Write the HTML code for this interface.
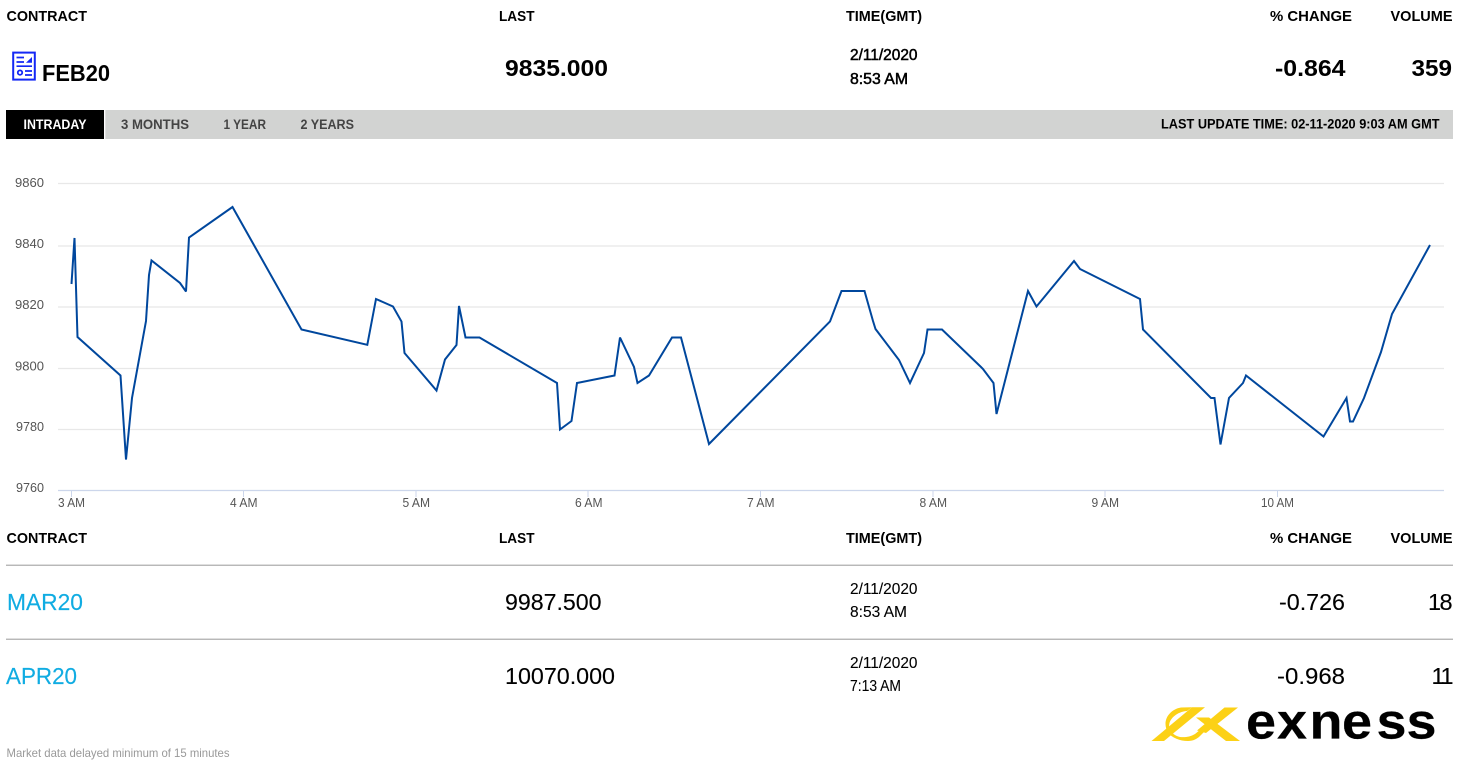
<!DOCTYPE html>
<html lang="en">
<head>
<meta charset="utf-8">
<title>FEB20 Contract</title>
<style>
html,body{margin:0;padding:0;background:#fff;width:1463px;height:768px;overflow:hidden}
svg{display:block;position:absolute;left:0;top:0}
text{font-family:"Liberation Sans",Arial,sans-serif;fill:#000}
.h{font-size:15px;font-weight:700}
.big{font-size:23.5px;font-weight:700}
.d{font-size:15.5px;stroke:#000;stroke-width:.5px}
.reg{font-size:23.5px;stroke:#000;stroke-width:.12px}
.d2{font-size:15.5px;stroke:#000;stroke-width:.1px}
.link{font-size:23.5px;fill:#10ace2;stroke:#10ace2;stroke-width:.15px}
.tab{font-size:13.5px;font-weight:700;fill:#444}
.ax{font-size:12.5px;fill:#555}
.ft{font-size:12px;fill:#999}
.grid{stroke:#e8e8e8;stroke-width:1.3}
</style>
</head>
<body>
<svg width="1463" height="768" viewBox="0 0 1463 768" xmlns="http://www.w3.org/2000/svg">
<!-- top header -->
<text class="h" x="6.5" y="21" textLength="80.5" lengthAdjust="spacingAndGlyphs">CONTRACT</text>
<text class="h" x="499" y="21" textLength="35.5" lengthAdjust="spacingAndGlyphs">LAST</text>
<text class="h" x="846" y="21" textLength="76" lengthAdjust="spacingAndGlyphs">TIME(GMT)</text>
<text class="h" x="1270" y="21" textLength="82" lengthAdjust="spacingAndGlyphs">% CHANGE</text>
<text class="h" x="1390.5" y="21" textLength="62" lengthAdjust="spacingAndGlyphs">VOLUME</text>

<!-- icon -->
<g fill="none" stroke="#1428f5">
<rect x="13.2" y="52.6" width="21.6" height="27" stroke-width="2"/>
<path d="M16.5 57.5H24M16.5 62H24M16.5 66.2H32M25 71H32M25 75H32" stroke-width="1.7"/>
<circle cx="20" cy="72.6" r="2.2" stroke-width="1.8"/>
</g>
<path d="M26 62.8L32 57V62.8Z" fill="#1428f5"/>

<!-- active row -->
<text class="big" x="42" y="81" textLength="68" lengthAdjust="spacingAndGlyphs">FEB20</text>
<text class="big" x="505" y="76" textLength="103" lengthAdjust="spacingAndGlyphs">9835.000</text>
<text class="d" x="850" y="60" textLength="67.5" lengthAdjust="spacingAndGlyphs">2/11/2020</text>
<text class="d" x="850" y="84" textLength="58" lengthAdjust="spacingAndGlyphs">8:53 AM</text>
<text class="big" x="1275" y="76" textLength="70.5" lengthAdjust="spacingAndGlyphs">-0.864</text>
<text class="big" x="1411.5" y="76" textLength="40.5" lengthAdjust="spacingAndGlyphs">359</text>

<!-- tab bar -->
<rect x="6" y="110" width="1447" height="29" fill="#d2d3d2"/>
<rect x="6" y="110" width="98" height="29" fill="#000"/>
<rect x="104" y="110" width="1.3" height="29" fill="#fff"/>
<text class="tab" style="fill:#fff" x="23.5" y="129" textLength="63" lengthAdjust="spacingAndGlyphs">INTRADAY</text>
<text class="tab" x="121" y="129" textLength="68" lengthAdjust="spacingAndGlyphs">3 MONTHS</text>
<text class="tab" x="223.5" y="129" textLength="42.5" lengthAdjust="spacingAndGlyphs">1 YEAR</text>
<text class="tab" x="300.5" y="129" textLength="53.5" lengthAdjust="spacingAndGlyphs">2 YEARS</text>
<text class="tab" style="fill:#000" x="1161" y="128.5" textLength="278.5" lengthAdjust="spacingAndGlyphs">LAST UPDATE TIME: 02-11-2020 9:03 AM GMT</text>

<!-- chart -->
<path class="grid" d="M58 183.5H1444M58 246H1444M58 307H1444M58 368.5H1444M58 429.5H1444" fill="none"/>
<path d="M58 490.5H1444" stroke="#ccd6eb" stroke-width="1.2" fill="none"/>
<path d="M71.5 490.5V497M243.5 490.5V497M416 490.5V497M588 490.5V497M760.5 490.5V497M933 490.5V497M1105 490.5V497M1277.5 490.5V497" stroke="#ccd6eb" stroke-width="1" fill="none"/>
<text class="ax" x="15" y="187" textLength="29" lengthAdjust="spacingAndGlyphs">9860</text>
<text class="ax" x="15" y="248" textLength="29" lengthAdjust="spacingAndGlyphs">9840</text>
<text class="ax" x="15" y="309" textLength="29" lengthAdjust="spacingAndGlyphs">9820</text>
<text class="ax" x="15" y="370.5" textLength="29" lengthAdjust="spacingAndGlyphs">9800</text>
<text class="ax" x="16" y="431" textLength="28" lengthAdjust="spacingAndGlyphs">9780</text>
<text class="ax" x="16" y="492" textLength="28" lengthAdjust="spacingAndGlyphs">9760</text>
<text class="ax" x="58" y="507" textLength="27" lengthAdjust="spacingAndGlyphs">3 AM</text>
<text class="ax" x="230" y="507" textLength="27.5" lengthAdjust="spacingAndGlyphs">4 AM</text>
<text class="ax" x="402.5" y="507" textLength="27.5" lengthAdjust="spacingAndGlyphs">5 AM</text>
<text class="ax" x="575" y="507" textLength="27.5" lengthAdjust="spacingAndGlyphs">6 AM</text>
<text class="ax" x="747" y="507" textLength="27.5" lengthAdjust="spacingAndGlyphs">7 AM</text>
<text class="ax" x="919.5" y="507" textLength="27.5" lengthAdjust="spacingAndGlyphs">8 AM</text>
<text class="ax" x="1091.5" y="507" textLength="27.5" lengthAdjust="spacingAndGlyphs">9 AM</text>
<text class="ax" x="1261" y="507" textLength="33" lengthAdjust="spacingAndGlyphs">10 AM</text>
<polyline fill="none" stroke="#00479d" stroke-width="2" stroke-linejoin="miter" stroke-miterlimit="3" points="71.5,284 74.5,238 77.5,337 120.5,375.5 126,459.5 132,398 146,321 149,275 151.5,260.5 180,283 186,291.5 189,237.5 232.5,207 301.5,329.5 367.3,344.8 376,299 393,306.5 401.5,321.5 404.5,353 436.5,390.5 445,359.5 456.5,345 459,306 465.5,337.5 479.5,337.5 557,383 560,429.5 571.5,421 577,383 614.5,375.5 620,337.5 634,367 637.5,383 649,375.5 672,337.5 681,337.5 709,444 830,321.5 841.5,291 864.5,291 873,321 875.5,329 899,360 910,383 924,353 927.5,329.5 942,329.5 981,367 983,369 993.5,383 996.5,414 1028,291 1036.5,306.5 1074,261 1080,269 1140,299 1143,329.5 1211,398 1214.5,398 1220.5,444.5 1229,398 1243,383 1246,375.5 1323.5,436.5 1346.5,398 1350,421.5 1353,421.5 1364,398 1381,352 1392,314 1430,245"/>

<!-- lower table -->
<text class="h" x="6.5" y="543" textLength="80.5" lengthAdjust="spacingAndGlyphs">CONTRACT</text>
<text class="h" x="499" y="543" textLength="35.5" lengthAdjust="spacingAndGlyphs">LAST</text>
<text class="h" x="846" y="543" textLength="76" lengthAdjust="spacingAndGlyphs">TIME(GMT)</text>
<text class="h" x="1270" y="543" textLength="82" lengthAdjust="spacingAndGlyphs">% CHANGE</text>
<text class="h" x="1390.5" y="543" textLength="62" lengthAdjust="spacingAndGlyphs">VOLUME</text>
<rect x="6" y="564.6" width="1447" height="1.3" fill="#b0b0b0"/>
<rect x="6" y="638.6" width="1447" height="1.3" fill="#b0b0b0"/>

<text class="link" x="7" y="610" textLength="76" lengthAdjust="spacingAndGlyphs">MAR20</text>
<text class="reg" x="505" y="610" textLength="96.5" lengthAdjust="spacingAndGlyphs">9987.500</text>
<text class="d2" x="850" y="594" textLength="67.5" lengthAdjust="spacingAndGlyphs">2/11/2020</text>
<text class="d2" x="850" y="617" textLength="57" lengthAdjust="spacingAndGlyphs">8:53 AM</text>
<text class="reg" x="1279" y="610" textLength="66" lengthAdjust="spacingAndGlyphs">-0.726</text>
<text class="reg" x="1428 1439.5" y="610">18</text>

<text class="link" x="6" y="684" textLength="71" lengthAdjust="spacingAndGlyphs">APR20</text>
<text class="reg" x="505" y="684" textLength="110" lengthAdjust="spacingAndGlyphs">10070.000</text>
<text class="d2" x="850" y="668" textLength="67.5" lengthAdjust="spacingAndGlyphs">2/11/2020</text>
<text class="d2" x="850" y="691" textLength="51" lengthAdjust="spacingAndGlyphs">7:13 AM</text>
<text class="reg" x="1277" y="684" textLength="68" lengthAdjust="spacingAndGlyphs">-0.968</text>
<text class="reg" x="1431.5 1440.5" y="684">11</text>

<text class="ft" x="6.5" y="757" textLength="223" lengthAdjust="spacingAndGlyphs">Market data delayed minimum of 15 minutes</text>

<!-- logo -->
<g fill="#fcd116">
<path d="M1151.5 741L1164 741L1205 707.3L1192 707.3Z"/>
<path d="M1192 707.3L1181 707.5C1172 709 1165.5 716 1165.5 724C1165.5 727 1166.5 730 1168 732.5L1170 730.5C1169 728 1168.8 725.5 1169.5 723C1171.5 716.5 1179 711.5 1187 711Z"/>
<path d="M1167.5 732C1172 738 1180 741 1188 741C1193 741 1197 739 1200 736L1204 732L1200.5 729.5L1195 734C1190 737 1185 737.5 1180 737C1175 736 1172 733 1170 730Z"/>
<path d="M1238 707.5L1224.5 707.5L1197 730.5L1206 733Z"/>
<path d="M1196 717.5L1209 717.5L1240 741L1226 741Z"/>
</g>
<text transform="scale(1.08,1)" x="1153.7 1182.4 1212.5 1242.6 1274.5 1302.3" y="738.5" font-size="50" font-weight="700" stroke="#000" stroke-width=".2">exness</text>
</svg>
</body>
</html>
